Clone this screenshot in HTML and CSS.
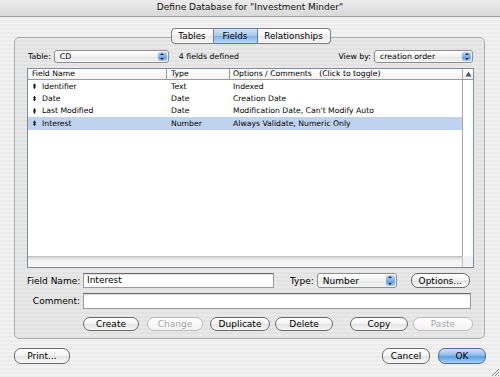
FILE: index.html
```html
<!DOCTYPE html>
<html>
<head>
<meta charset="utf-8">
<link rel="stylesheet" href="styles.css">
</head>
<body>
<div class="window">
  <div class="titlebar">Define Database for "Investment Minder"</div>
  <div class="group">
    <div class="tabs">
      <div class="tab t-tables">Tables</div>
      <div class="tab t-fields active">Fields</div>
      <div class="tab t-rel">Relationships</div>
    </div>
    <div class="toprow">
      <span class="lbl">Table:</span>
      <div class="popup p-table"><span>CD</span><i class="arrows"></i></div>
      <span class="count">4 fields defined</span>
      <span class="spacer"></span>
      <span class="lbl">View by:</span>
      <div class="popup p-view"><span>creation order</span><i class="arrows"></i></div>
    </div>
    <div class="list">
      <div class="list-main">
        <div class="cols">
          <div class="row head">
            <div class="c c1">Field Name</div>
            <div class="c c2">Type</div>
            <div class="c c3">Options / Comments&nbsp;&nbsp; (Click to toggle)</div>
          </div>
          <div class="row">
            <div class="c c1"><i class="grip"></i>Identifier</div>
            <div class="c c2">Text</div>
            <div class="c c3">Indexed</div>
          </div>
          <div class="row">
            <div class="c c1"><i class="grip"></i>Date</div>
            <div class="c c2">Date</div>
            <div class="c c3">Creation Date</div>
          </div>
          <div class="row">
            <div class="c c1"><i class="grip"></i>Last Modified</div>
            <div class="c c2">Date</div>
            <div class="c c3">Modification Date, Can't Modify Auto</div>
          </div>
          <div class="row sel">
            <div class="c c1"><i class="grip"></i>Interest</div>
            <div class="c c2">Number</div>
            <div class="c c3">Always Validate, Numeric Only</div>
          </div>
        </div>
        <div class="vscroll">
          <div class="vhead"><svg width="7" height="6" viewBox="0 0 7 6"><path d="M3.5 0.5 L6.5 5.5 L0.5 5.5 Z" fill="#555"/></svg></div>
          <div class="vtrack"></div>
        </div>
      </div>
      <div class="hscroll"><div class="htrack"></div><div class="corner"></div></div>
    </div>
    <div class="formrow r-name">
      <label class="flabel">Field Name:</label>
      <div class="input i-name">Interest</div>
      <label class="tlabel">Type:</label>
      <div class="popup p-type"><span>Number</span><i class="arrows"></i></div>
      <button class="btn b-options">Options...</button>
    </div>
    <div class="formrow r-comment">
      <label class="flabel">Comment:</label>
      <div class="input i-comment"></div>
    </div>
    <div class="btnrow">
      <button class="btn b-create">Create</button>
      <button class="btn b-change disabled">Change</button>
      <button class="btn b-dup">Duplicate</button>
      <button class="btn b-delete">Delete</button>
      <button class="btn b-copy">Copy</button>
      <button class="btn b-paste disabled">Paste</button>
    </div>
  </div>
  <div class="bottomrow">
    <button class="btn b-print">Print...</button>
    <span class="spacer"></span>
    <button class="btn b-cancel">Cancel</button>
    <button class="btn b-ok default">OK</button>
  </div>
  <svg class="grow" width="10" height="10" viewBox="0 0 10 10"><path d="M9 2 L2 9 M9 5 L5 9 M9 8 L8 9" stroke="#8a8a8a" stroke-width="1"/></svg>
</div>
</body>
</html>
```
FILE: styles.css
```css
* { box-sizing: border-box; }
html, body { margin: 0; padding: 0; }
body {
  width: 500px;
  height: 377px;
  overflow: hidden;
  font-family: "DejaVu Sans", "Liberation Sans", sans-serif;
  color: #000;
}
.window {
  position: relative;
  width: 500px;
  height: 377px;
  background: repeating-linear-gradient(#ececec 0, #ececec 2px, #f2f2f2 2px, #f2f2f2 4px);
}
.titlebar {
  height: 17px;
  background: linear-gradient(#ececec, #d9d9d9);
  border-bottom: 1px solid #9c9c9c;
  text-align: center;
  font-size: 9px;
  line-height: 14px;
  color: #111;
}
.group {
  margin: 20px 15px 0 14px;
  height: 302px;
  border: 1px solid #acacac;
  border-radius: 5px;
  background: rgba(0, 0, 0, 0.04);
  padding: 0 10px 0 12px;
}
.tabs {
  display: flex;
  justify-content: center;
  margin-top: -10px;
  height: 16px;
}
.tab {
  height: 16px;
  border: 1px solid #7c7c7c;
  border-left: none;
  font-size: 8.8px;
  line-height: 14px;
  text-align: center;
  background: linear-gradient(#ffffff, #f3f3f3 50%, #e9e9e9 51%, #f7f7f7);
}
.t-tables { width: 43px; border-left: 1px solid #7c7c7c; border-radius: 4px 0 0 4px; }
.t-fields { width: 44px; }
.t-rel { width: 73px; border-radius: 0 4px 4px 0; }
.tab.active {
  background: linear-gradient(#d3e5f8, #a3c8ee 50%, #7fb2e8 51%, #b9daf8);
  border-color: #5d7fa7;
}
.toprow {
  display: flex;
  align-items: center;
  margin-top: 6px;
  height: 13px;
  font-size: 7.8px;
}
.lbl { margin-left: 1px; margin-right: 3px; }
.spacer { flex: 1; }
.count { margin-left: 10px; }
.popup {
  position: relative;
  height: 13px;
  border: 1px solid #8e8e8e;
  border-radius: 3px;
  background: linear-gradient(#ffffff, #f1f1f1 50%, #e7e7e7 51%, #f5f5f5);
  display: flex;
  align-items: center;
  padding-left: 5px;
}
.p-table { width: 115px; }
.p-view { width: 99px; margin-right: 1px; }
.arrows {
  position: absolute;
  right: 1px;
  top: 1px;
  width: 9px;
  height: 9px;
  border-radius: 2px;
  background: linear-gradient(#bcd7f4, #7fb0e6 50%, #5f9be0 51%, #9ecbf5);
}
.arrows::before, .arrows::after {
  content: "";
  position: absolute;
  left: 2.5px;
  border-left: 2px solid transparent;
  border-right: 2px solid transparent;
}
.arrows::before { top: 1px; border-bottom: 2.5px solid #1d2c44; }
.arrows::after { bottom: 1px; border-top: 2.5px solid #1d2c44; }
.list {
  margin-top: 5px;
  height: 200px;
  border: 1px solid #7d8b9f;
  background: #fff;
  display: flex;
  flex-direction: column;
  font-size: 7.7px;
}
.list-main { flex: 1; display: flex; }
.cols { flex: 1; }
.row { display: flex; height: 12.4px; align-items: center; }
.row.head {
  height: 11px;
  border-bottom: 1px solid #9a9a9a;
  background: linear-gradient(#ffffff, #f2f2f2);
}
.row.sel { background: #bfd3ee; }
.c { white-space: nowrap; overflow: hidden; }
.c1 { width: 139px; padding-left: 5px; display: flex; align-items: center; }
.c2 { width: 63px; padding-left: 4px; }
.c3 { flex: 1; padding-left: 3px; }
.head .c { height: 10px; line-height: 10px; }
.head .c1 { padding-left: 4px; border-right: 1px solid #9a9a9a; }
.head .c2 { border-right: 1px solid #9a9a9a; }
.grip {
  width: 3px;
  height: 6px;
  margin-right: 6px;
  background: #1b1b1b;
  clip-path: polygon(50% 0, 100% 40%, 60% 50%, 100% 60%, 50% 100%, 0 60%, 40% 50%, 0 40%);
}
.vscroll {
  width: 11px;
  display: flex;
  flex-direction: column;
  border-left: 1px solid #a6a6a6;
}
.vhead {
  height: 11px;
  border-bottom: 1px solid #9a9a9a;
  background: linear-gradient(#ffffff, #f0f0f0);
  display: flex;
  align-items: center;
  justify-content: center;
}
.vtrack { flex: 1; background: #fff; }
.hscroll { height: 11px; display: flex; }
.htrack {
  flex: 1;
  background: linear-gradient(#b9b9b9, #dedede 2px, #f2f2f2 4px, #f7f7f7);
}
.corner { width: 11px; background: #f2f2f2; border-left: 1px solid #c4c4c4; }
.formrow {
  display: flex;
  align-items: center;
  font-size: 9px;
}
.r-name { margin-top: 5px; height: 15px; }
.r-comment { margin-top: 5px; height: 16px; }
.flabel { width: 53px; text-align: right; margin-right: 3px; white-space: nowrap; }
.input {
  height: 100%;
  background: #fff;
  border: 1px solid #9a9a9a;
  border-top-color: #6c6c6c;
  box-shadow: inset 0 1px 1px rgba(0, 0, 0, 0.15);
  padding-left: 3px;
  line-height: 13px;
}
.i-name { width: 191px; }
.i-comment { width: 388px; }
.tlabel { margin-left: 16px; margin-right: 3px; }
.p-type { width: 80px; height: 15px; }
.p-type .arrows { height: 11px; }
.btn {
  font-family: inherit;
  font-size: 9px;
  color: #000;
  height: 14px;
  padding: 0;
  border: 1px solid #6a6a6a;
  border-radius: 7px;
  background: linear-gradient(#ffffff, #f4f4f4 45%, #e4e4e4 55%, #f8f8f8);
  line-height: 12px;
}
.btn.disabled { color: #a5a5a5; border-color: #bdbdbd; background: linear-gradient(#fdfdfd, #f3f3f3); }
.btn.default {
  background: linear-gradient(#cfe3f8, #8dbbeb 45%, #5e9de1 55%, #a8d3f8);
  border-color: #4b6d96;
}
.b-options { width: 59px; margin-left: 14px; height: 15px; }
.btnrow {
  display: flex;
  margin-top: 8px;
  padding-left: 56px;
}
.b-create { width: 56px; }
.b-change { width: 56px; margin-left: 8px; }
.b-dup { width: 60px; margin-left: 7px; }
.b-delete { width: 58px; margin-left: 5px; }
.b-copy { width: 58px; margin-left: 17px; }
.b-paste { width: 60px; margin-left: 5px; }
.bottomrow {
  display: flex;
  margin-top: 9px;
  padding: 0 14px;
}
.bottomrow .btn { height: 16px; line-height: 14px; }
.b-print { width: 56px; }
.b-cancel { width: 48px; }
.b-ok { width: 48px; margin-left: 8px; }
.grow { position: absolute; right: 0; bottom: 0; }
```
